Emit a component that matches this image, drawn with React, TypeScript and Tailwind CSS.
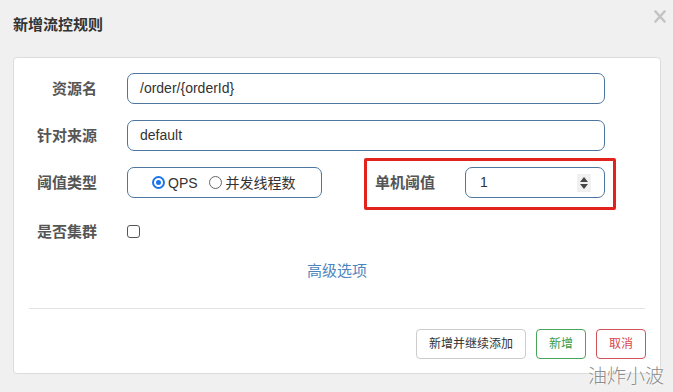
import React from "react";

const cjk = { fontFamily: '"Liberation Sans", "Noto Sans CJK SC", sans-serif' };

function Label({ children }: { children: React.ReactNode }) {
  return (
    <div className="w-[83px] shrink-0 text-right text-[15px] font-bold leading-[20px] text-[#555]">
      {children}
    </div>
  );
}

export default function App() {
  return (
    <div
      className="relative h-[392px] w-[673px] overflow-hidden bg-[#f0f0f0]"
      style={cjk}
    >
      {/* header */}
      <div className="flex h-[57px] items-start pl-[13px] pt-[15px]">
        <div className="text-[15px] font-bold leading-[20px] text-[#333]">新增流控规则</div>
      </div>
      <svg
        className="absolute left-[654px] top-[10px]"
        width="12"
        height="13"
        viewBox="0 0 12 13"
      >
        <path d="M1.5 1.5 L10.5 11.5 M10.5 1.5 L1.5 11.5" stroke="#c4c4c4" strokeWidth="2.6" strokeLinecap="round" />
      </svg>

      {/* card */}
      <div className="ml-[13px] flex h-[317px] w-[648px] flex-col rounded-[4px] border border-[#dcdcdc] bg-white pt-[15px]">
        {/* row 1 */}
        <div className="flex h-[31px] items-center">
          <Label>资源名</Label>
          <div className="ml-[30px] flex h-[31px] w-[478px] items-center rounded-[7px] border border-[#4d77a0] pl-[12px] text-[14px] text-[#333]">
            /order/{"{"}orderId{"}"}
          </div>
        </div>
        {/* row 2 */}
        <div className="mt-[16px] flex h-[31px] items-center">
          <Label>针对来源</Label>
          <div className="ml-[30px] flex h-[31px] w-[478px] items-center rounded-[7px] border border-[#4d77a0] pl-[12px] text-[14px] text-[#333]">
            default
          </div>
        </div>
        {/* row 3 */}
        <div className="mt-[16px] flex h-[31px] items-center">
          <Label>阈值类型</Label>
          <div className="ml-[30px] flex h-[31px] w-[195px] items-center rounded-[7px] border border-[#4d77a0] pl-[24px] text-[14px] text-[#333]">
            <span className="flex h-[13px] w-[13px] items-center justify-center rounded-full bg-[#1a73e8]">
              <span className="h-[9px] w-[9px] rounded-full border-[2px] border-white bg-[#1a73e8]" />
            </span>
            <span className="ml-[3px] leading-[18px]">QPS</span>
            <span className="ml-[11px] h-[13px] w-[13px] rounded-full border border-[#666] bg-white" />
            <span className="ml-[4px] leading-[18px]">并发线程数</span>
          </div>
          <div className="relative ml-[53px] flex h-[31px] items-center">
            <div className="pointer-events-none absolute left-[-11px] top-[-9px] h-[52px] w-[252px] rounded-[2px] border-[3px] border-[#e0231f]" />
            <div className="w-[62px] text-[15px] font-bold leading-[20px] text-[#555]">单机阈值</div>
            <div className="ml-[28px] flex h-[31px] w-[140px] items-center justify-between rounded-[7px] border border-[#4d77a0] pl-[14px] pr-[13px] text-[14px] text-[#333]">
              <span>1</span>
              <span className="flex h-[18px] w-[14px] flex-col items-center justify-center gap-[2px] bg-[#f0f0f0]">
                <svg width="8" height="5" viewBox="0 0 8 5"><path d="M0 5 L4 0 L8 5 Z" fill="#444" /></svg>
                <svg width="8" height="5" viewBox="0 0 8 5"><path d="M0 0 L4 5 L8 0 Z" fill="#444" /></svg>
              </span>
            </div>
          </div>
        </div>
        {/* row 4 */}
        <div className="mt-[18px] flex h-[31px] items-center">
          <Label>是否集群</Label>
          <span className="ml-[30px] h-[13px] w-[13px] rounded-[3px] border border-[#555] bg-white" />
        </div>
        {/* advanced */}
        <div className="mt-[14px] text-center text-[15px] leading-[20px] text-[#4a85c0]">高级选项</div>
        {/* divider */}
        <div className="mx-[15px] mt-[27px] h-px bg-[#e3e3e3]" />
        {/* buttons */}
        <div className="mt-[20px] flex justify-end gap-[10px] pr-[14px]">
          <div className="flex h-[30px] w-[110px] items-center justify-center rounded-[4px] border border-[#cccccc] bg-white text-[12px] text-[#333]">
            新增并继续添加
          </div>
          <div className="flex h-[30px] w-[50px] items-center justify-center rounded-[4px] border border-[#4aa55a] bg-white text-[12px] text-[#3d9a4a]">
            新增
          </div>
          <div className="flex h-[30px] w-[50px] items-center justify-center rounded-[4px] border border-[#d0525a] bg-white text-[12px] text-[#d9434e]">
            取消
          </div>
        </div>
      </div>

      {/* watermark */}
      <div
        className="absolute left-[588px] top-[364px] text-[19px] font-light leading-[26px] text-[#8c8c8c]"
        style={{ textShadow: "0 0 2px #fff, 0 0 2px #fff" }}
      >
        油炸小波
      </div>
    </div>
  );
}
